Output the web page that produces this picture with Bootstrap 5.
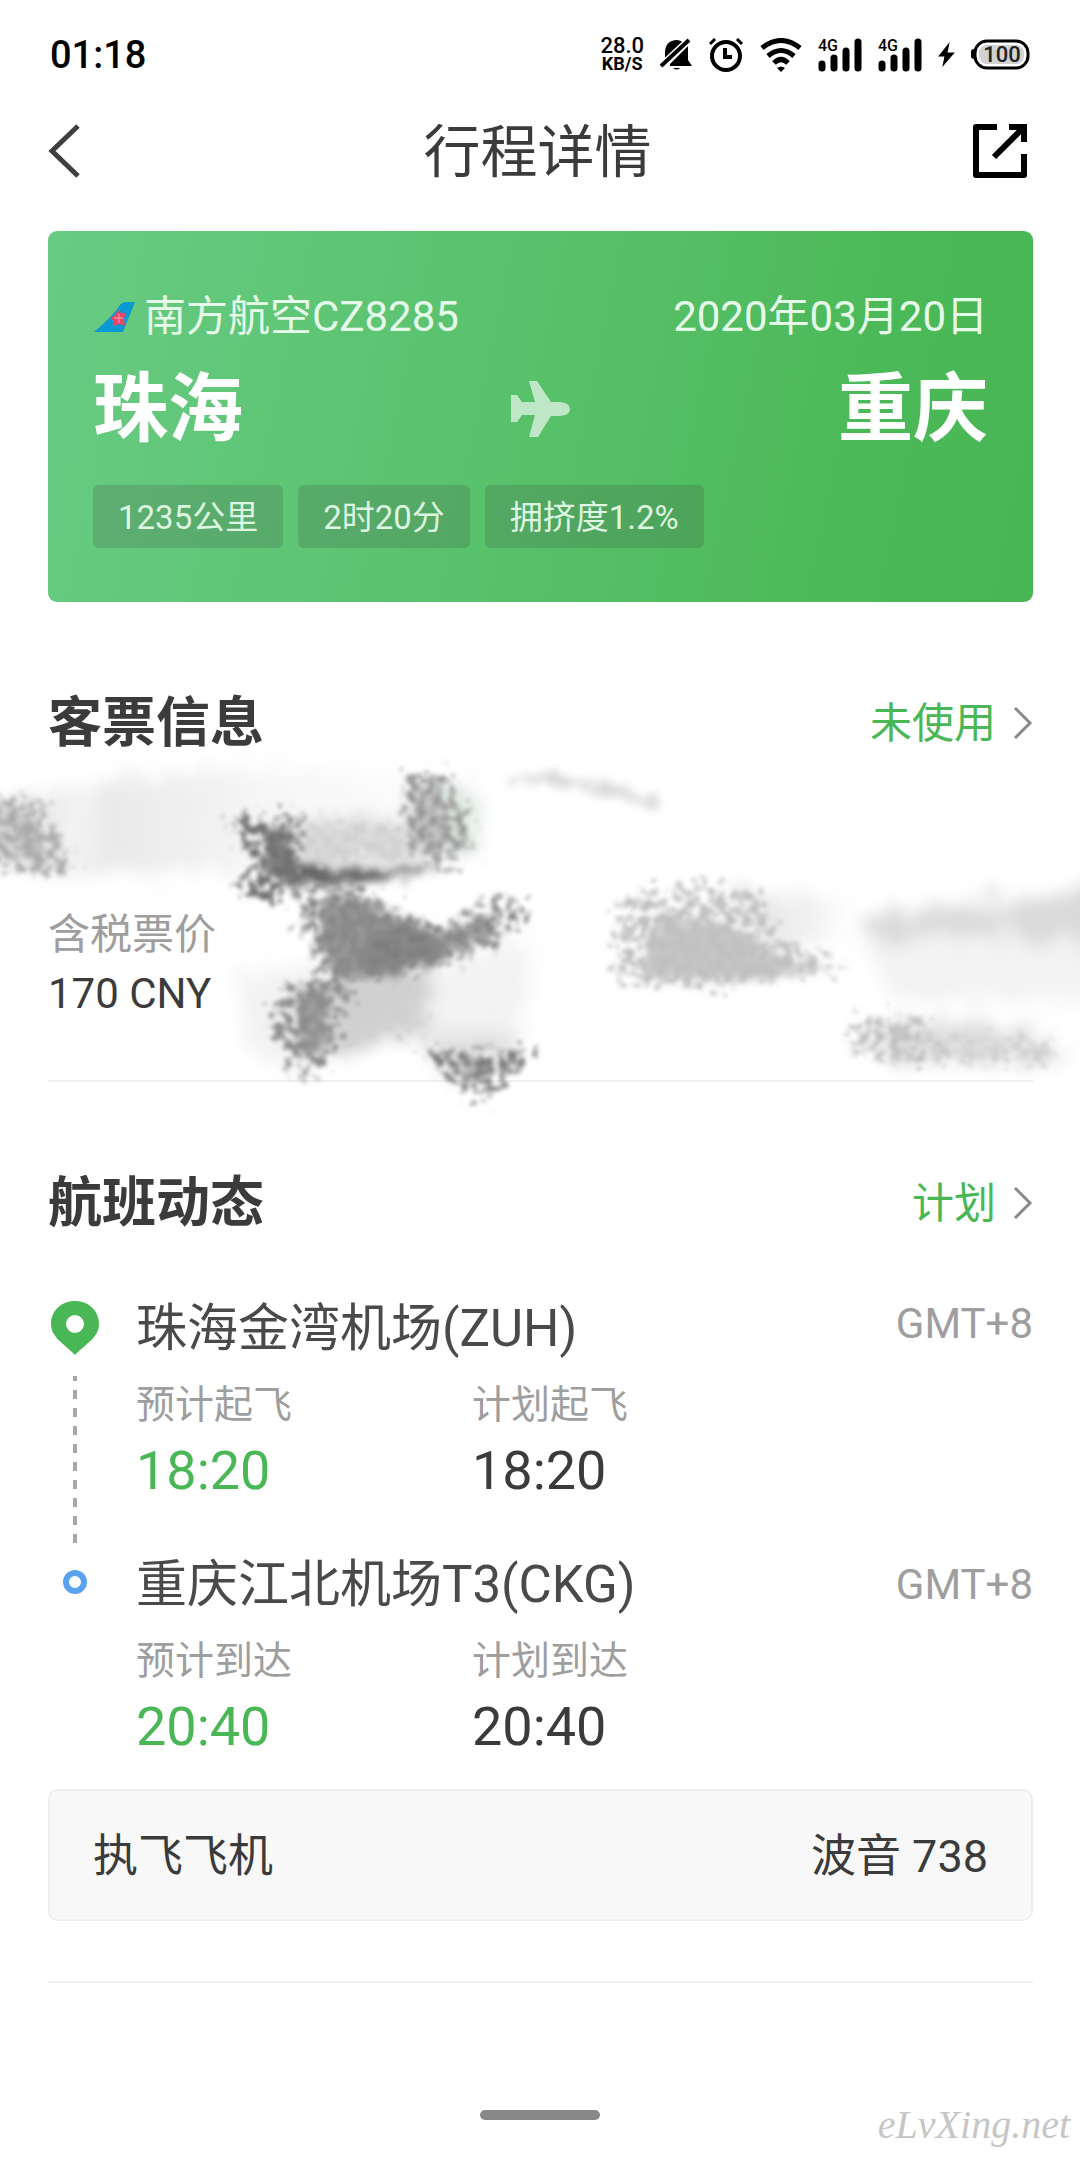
<!DOCTYPE html>
<html lang="zh-CN">
<head>
<meta charset="utf-8">
<meta name="viewport" content="width=device-width, initial-scale=1">
<title>行程详情</title>
<link href="https://cdn.jsdelivr.net/npm/bootstrap@5.3.0/dist/css/bootstrap.min.css" rel="stylesheet">
<style>
  :root { --brand: #4ab756; --ink: #3b3b3b; --soft: #9e9e9e; }
  body { font-family: Roboto, "Noto Sans CJK SC", sans-serif; font-size: 42px; line-height: 50px; color: var(--ink); background: #fff; overflow-x: hidden; }
  svg { display: block; flex: none; }
  a { text-decoration: none; }
  .status-bar { height: 108px; padding: 1px 50px 0; color: #000; }
  .status-icons { gap: 16px; }
  .clock-text { font-size: 38px; font-weight: 500; }
  .net-speed { font-size: 22px; font-weight: 500; line-height: 18px; }
  .net-speed .unit { font-size: 18px; font-weight: 700; }
  .top-nav { height: 86px; padding: 0 53px 0 48px; }
  .top-nav h1 { padding-top: 4px; font-size: 57px; line-height: 80px; font-weight: 400; }
  .page-body { padding: 0 47px 0 48px; }
  .trip-card { margin-top: 37px; padding: 61px 45px 54px; border: 0; border-radius: 9px; color: #fff; background: linear-gradient(102deg, #68cb83 0%, #57c16a 50%, #4cb959 80%, #48b654 100%); }
  .trip-meta { color: #e6fae9; }
  .trip-meta svg { margin-right: 9px; }
  .cities { margin-top: 27px; font-size: 75px; line-height: 80px; font-weight: 700; }
  .tag-list { margin-top: 36px; gap: 15px; }
  .trip-tag { padding: 8px 25px 5px; border-radius: 6px; font-size: 33px; color: #dcf6e1; background: rgba(64, 64, 64, .2); }
  .section-title { font-size: 54px; line-height: 60px; font-weight: 700; }
  .section-head { margin-top: 92px; }
  .state-link { color: var(--brand); gap: 17px; }
  .state-link:hover { color: var(--brand); }
  .fare { margin-top: 156px; }
  .fare dt { font-weight: 400; color: var(--soft); }
  .fare dd { margin-top: 9px; }
  .rule { height: 2px; border: 0; opacity: 1; background: #f0f0f0; margin: 61px 0 0; }
  .legs { margin-top: 65px; }
  .leg { gap: 34px; }
  .leg-mark { width: 54px; }
  .leg-line { width: 4px; margin: 20px 0 12px; background: repeating-linear-gradient(#a8a8a8 0 9px, transparent 9px 18px) 0 -4px; }
  .leg-info { padding-bottom: 54px; }
  .leg:last-child .leg-info { padding-bottom: 32px; }
  .airport { font-size: 51px; line-height: 60px; font-weight: 400; color: #4a4a4a; }
  .zone { color: var(--soft); }
  .times { margin-top: 21px; }
  .times > div { width: 336px; }
  .times dt { font-size: 39px; font-weight: 400; color: var(--soft); }
  .times dd { font-size: 54px; line-height: 60px; margin-top: 11px; }
  .times .expected { color: var(--brand); }
  .plane-box { padding: 40px 43px 36px; border: 2px solid #eee; border-radius: 10px; background: #f8f8f8; font-size: 45px; line-height: 52px; }
  .end-rule { margin-top: 60px; }
  .home-zone { margin-top: 127px; padding-bottom: 39px; }
  .home-bar { width: 120px; height: 10px; border-radius: 5px; background: #888; }
  .watermark { right: 10px; bottom: 12px; font: italic 40px/44px "Liberation Serif", serif; color: #c6c6c6; }
  .smudge { left: 0; top: 748px; width: 100%; pointer-events: none; }
</style>
<script src="https://cdn.jsdelivr.net/npm/bootstrap@5.3.0/dist/js/bootstrap.bundle.min.js" defer></script>
</head>
<body>
<div class="position-relative">
  <div class="status-bar d-flex align-items-center justify-content-between">
    <span class="clock-text">01:18</span>
    <div class="status-icons d-flex align-items-center">
      <div class="net-speed text-center"><div>28.0</div><div class="unit">KB/S</div></div>
      <svg width="33" height="33" viewBox="0 0 33 33"><path d="M5 26V15Q5 3 16 2Q21 2 25 6L5 26ZM10 26L28 8V22L32 28H10ZM13 30H20Q17 33 13 30Z"/><path d="M1 28L29 2" stroke="#fff" stroke-width="7"/><path d="M1 28L29 2" stroke="#000" stroke-width="4"/></svg>
      <svg width="35" height="34" viewBox="0 0 35 34" fill="none" stroke="#000"><circle cx="17" cy="18" r="14" stroke-width="4"/><path d="M16 10V19H23" stroke-width="4"/><path d="M1 6L6 1M33 6L28 1" stroke-width="3"/></svg>
      <svg width="42" height="34" viewBox="0 0 42 34" fill="none" stroke="#000" stroke-width="5"><path d="M2 10Q21-5 40 10M8 18Q21 7 34 18M14 25Q21 18 28 25"/><path d="M17 30Q21 27 25 30L21 34Z" fill="#000" stroke="none"/></svg>
      <svg width="44" height="34" viewBox="0 0 44 34"><text x="0" y="13" font-size="16" font-weight="500">4G</text><path d="M4 26V30M16 20V30M28 13V30M40 4V30" stroke="#000" stroke-width="7" stroke-linecap="round"/></svg>
      <svg width="44" height="34" viewBox="0 0 44 34"><text x="0" y="13" font-size="16" font-weight="500">4G</text><path d="M4 26V30M16 20V30M28 13V30M40 4V30" stroke="#000" stroke-width="7" stroke-linecap="round"/></svg>
      <svg width="17" height="25" viewBox="0 0 16 24"><path d="M11 0L0 14H6L4 24L16 10H9Z"/></svg>
      <svg width="59" height="31" viewBox="0 0 59 31"><rect x="0" y="10" width="6" height="10" rx="3"/><rect x="4" y="2" width="53" height="27" rx="12" fill="#fff" stroke="#000" stroke-width="3"/><rect x="8" y="6" width="45" height="19" rx="8" fill="#d2d2d2"/><text x="31" y="23" font-size="22" font-weight="500" text-anchor="middle" fill="#222">100</text></svg>
    </div>
  </div>

  <nav class="top-nav d-flex align-items-center justify-content-between">
    <button type="button" class="btn p-0 border-0" aria-label="返回"><svg width="54" height="54" viewBox="0 0 54 54" fill="none" stroke="#3f3f3f" stroke-width="5"><path d="M30 2L4 27L30 52"/></svg></button>
    <h1 class="mb-0">行程详情</h1>
    <button type="button" class="btn p-0 border-0" aria-label="分享"><svg width="54" height="54" viewBox="0 0 54 54" fill="none" stroke="#000" stroke-width="6"><path d="M24 3H3V51H51V30" stroke-linejoin="round"/><path d="M36 3H51V18M50 4L21 33" /></svg></button>
  </nav>

  <main class="page-body">
    <section class="trip-card card">
      <div class="trip-meta d-flex justify-content-between">
        <div class="d-flex align-items-center">
          <svg width="42" height="32" viewBox="0 0 42 32"><path d="M1 31Q20 15 27 4Q29 1 32 1H42L30 31Z" fill="#0a9ad2"/><path d="M25 9L28 12L33 12L31 17L32 25L27 23L21 25L21 20L17 17L22 14Z" fill="#e8456a"/><path d="M26 13V22M21 17H30" stroke="#f7a0b0" stroke-width="1"/></svg>
          <span>南方航空CZ8285</span>
        </div>
        <span>2020年03月20日</span>
      </div>
      <div class="cities d-flex align-items-center justify-content-between">
        <span>珠海</span>
        <svg width="59" height="56" viewBox="0 0 59 56" fill="#bfe7c7"><path d="M18 0H26L40 21H49Q59 22 59 28Q59 34 49 35H40L27 56H18L24 34H11L6 41H0V14H6L11 21H24Z"/></svg>
        <span>重庆</span>
      </div>
      <div class="tag-list d-flex flex-wrap">
        <span class="trip-tag">1235公里</span>
        <span class="trip-tag">2时20分</span>
        <span class="trip-tag">拥挤度1.2%</span>
      </div>
    </section>

    <section>
      <div class="section-head d-flex align-items-center justify-content-between">
        <h2 class="section-title m-0">客票信息</h2>
        <a href="#" class="state-link d-flex align-items-center">未使用<svg width="20" height="34" viewBox="0 0 20 34" fill="none" stroke="#888" stroke-width="3"><path d="M2 1L17 16L2 31"/></svg></a>
      </div>
      <dl class="fare mb-0">
        <dt>含税票价</dt>
        <dd class="mb-0">170 CNY</dd>
      </dl>
      <hr class="rule">
    </section>

    <section>
      <div class="section-head d-flex align-items-center justify-content-between">
        <h2 class="section-title m-0">航班动态</h2>
        <a href="#" class="state-link d-flex align-items-center">计划<svg width="20" height="34" viewBox="0 0 20 34" fill="none" stroke="#888" stroke-width="3"><path d="M2 1L17 16L2 31"/></svg></a>
      </div>
      <div class="legs">
        <div class="leg d-flex">
          <div class="leg-mark d-flex flex-column align-items-center">
            <svg width="48" height="57" viewBox="0 0 48 57"><path d="M24 2C10 2 0 12 0 25C0 38 12 44 24 56C36 44 48 38 48 25C48 12 38 2 24 2Z" fill="#4ab756"/><circle cx="24" cy="25" r="9" fill="#fff"/></svg>
            <div class="leg-line flex-grow-1"></div>
          </div>
          <div class="leg-info flex-grow-1">
            <div class="d-flex justify-content-between align-items-start"><h3 class="airport m-0">珠海金湾机场(ZUH)</h3><span class="zone">GMT+8</span></div>
            <dl class="times d-flex mb-0">
              <div><dt>预计起飞</dt><dd class="expected mb-0">18:20</dd></div>
              <div><dt>计划起飞</dt><dd class="mb-0">18:20</dd></div>
            </dl>
          </div>
        </div>
        <div class="leg d-flex">
          <div class="leg-mark d-flex flex-column align-items-center">
            <svg width="26" height="56" viewBox="0 0 26 56"><circle cx="13" cy="27" r="9" fill="#fff" stroke="#5aa2ee" stroke-width="6"/></svg>
          </div>
          <div class="leg-info flex-grow-1">
            <div class="d-flex justify-content-between align-items-center"><h3 class="airport m-0">重庆江北机场T3(CKG)</h3><span class="zone">GMT+8</span></div>
            <dl class="times d-flex mb-0">
              <div><dt>预计到达</dt><dd class="expected mb-0">20:40</dd></div>
              <div><dt>计划到达</dt><dd class="mb-0">20:40</dd></div>
            </dl>
          </div>
        </div>
      </div>
      <div class="plane-box d-flex justify-content-between"><span>执飞飞机</span><span>波音 738</span></div>
      <hr class="rule end-rule">
    </section>
  </main>

  <div class="home-zone d-flex justify-content-center"><div class="home-bar"></div></div>
  <div class="watermark position-absolute">eLvXing.net</div>

  <!-- brushed-out private ticket details -->
  <svg class="smudge position-absolute" viewBox="0 748 1080 366" aria-hidden="true">
    <defs>
      <filter id="soft" x="-10%" y="-20%" width="120%" height="140%">
        <feTurbulence type="fractalNoise" baseFrequency="0.06" numOctaves="4" seed="4" result="n"/>
        <feDisplacementMap in="SourceGraphic" in2="n" scale="50" xChannelSelector="R" yChannelSelector="G"/>
        <feGaussianBlur stdDeviation="8"/>
      </filter>
      <filter id="grain" x="-20%" y="-20%" width="140%" height="140%">
        <feTurbulence type="fractalNoise" baseFrequency="0.12" numOctaves="3" seed="9" result="n"/>
        <feDisplacementMap in="SourceGraphic" in2="n" scale="50" xChannelSelector="R" yChannelSelector="G" result="d"/>
        <feColorMatrix in="n" type="matrix" values="0 0 0 0 0  0 0 0 0 0  0 0 0 0 0  0 0 5 0 -1.9" result="m"/>
        <feComposite in="d" in2="m" operator="in"/>
        <feGaussianBlur stdDeviation="2"/>
      </filter>
      <filter id="brush" x="-20%" y="-20%" width="140%" height="140%">
        <feTurbulence type="fractalNoise" baseFrequency="0.1" numOctaves="3" seed="2" result="n"/>
        <feDisplacementMap in="SourceGraphic" in2="n" scale="26" xChannelSelector="R" yChannelSelector="G"/>
        <feGaussianBlur stdDeviation="4"/>
      </filter>
      <linearGradient id="band"><stop offset="0" stop-color="#c4c4c4"/><stop offset=".2" stop-color="#f5f5f5"/><stop offset=".27" stop-color="#e9e9e9"/><stop offset=".6" stop-color="#f7f7f7"/><stop offset="1" stop-color="#fefefe"/></linearGradient>
      <linearGradient id="fadeDown" x2="0" y2="1"><stop offset="0" stop-color="#fafafa"/><stop offset="1" stop-color="#c6c6c6"/></linearGradient>
      <linearGradient id="fadeRight"><stop offset="0" stop-color="#dedede"/><stop offset="1" stop-color="#fcfcfc"/></linearGradient>
    </defs>
    <g filter="url(#soft)">
      <path d="M-30 810Q120 772 270 768L480 775V865L225 870Q130 880 40 872L-30 850Z" fill="url(#band)"/>
      <path d="M290 820H400L460 785L480 800L460 860L300 868Z" fill="#dadada"/>
      <path d="M430 790L480 800V850L440 860Z" fill="#dfeae1"/>
      <path d="M240 970L340 960L420 970L530 940L520 1040L440 1060L400 1030L300 1075L245 1050Z" fill="#f3f3f3"/>
      <path d="M330 975L425 965V1028L330 1062Z" fill="#d0d0d0"/>
      <path d="M410 1025L510 1020L520 1055L440 1065Z" fill="url(#fadeDown)"/>
      <path d="M730 893L850 900V940L770 950Z" fill="url(#fadeRight)"/>
      <path d="M860 935H1110V1000H890Z" fill="#f3f3f3"/>
      <path d="M865 916L1010 900L1110 880V950L1010 936L870 938Z" fill="#dadada"/>
      <path d="M880 1025L1030 1030L1070 1062L890 1062Z" fill="#dcdcdc"/>
    </g>
    <g filter="url(#brush)">
      <path d="M510 778Q580 776 660 805" fill="none" stroke="#d8d8d8" stroke-width="9"/>
      <path d="M322 900L350 895L435 932L400 972L340 978L318 940Z" fill="#979797"/>
      <path d="M370 938L410 922L438 938V965L365 972Z" fill="#7c7c7c"/>
      <path d="M290 864Q370 874 450 864L380 882L290 886Z" fill="#636363"/>
      <path d="M262 835L288 825L296 880H268Z" fill="#808080"/>
      <path d="M660 915L730 925L770 955L835 968L740 982L640 975Z" fill="#c6c6c6"/>
      <path d="M295 990L330 985L325 1050L302 1060Z" fill="#a0a0a0"/>
      <path d="M430 935L490 915L497 932L440 960Z" fill="#a0a0a0"/>
      <path d="M450 1065H500L478 1085Z" fill="#aaa"/>
      <path d="M8 815L30 820L48 865L25 860Z" fill="#c4c4c4"/>
      <path d="M410 780L435 785L450 845L425 840Z" fill="#c4c4c4"/>
    </g>
    <g filter="url(#grain)">
      <path d="M-10 800L40 800L80 872L40 878L-10 862Z" fill="#aaa"/>
      <path d="M225 820L305 815L305 888L260 902L235 885L255 865Z" fill="#707070"/>
      <path d="M405 770L450 775L475 855L435 865L400 840Z" fill="#999"/>
      <path d="M300 890L350 885L440 930L510 892L528 918L480 950L430 972L330 978L300 925Z" fill="#878787"/>
      <path d="M320 972L355 985L328 1065L297 1075L270 1020L285 990Z" fill="#8c8c8c"/>
      <path d="M420 1055L480 1050L535 1048L485 1102L465 1092Z" fill="#7d7d7d"/>
      <path d="M618 900L680 885L760 893L775 940L850 966L720 988L615 980Z" fill="#bfbfbf"/>
      <path d="M850 1020L925 1020L945 1060H880L850 1050Z" fill="#bfbfbf"/>
      <path d="M300 825H410V862H300ZM340 1000H420V1030L340 1045ZM940 1040H1050V1062H940Z" fill="#d0d0d0"/>
    </g>
  </svg>
</div>
</body>
</html>
